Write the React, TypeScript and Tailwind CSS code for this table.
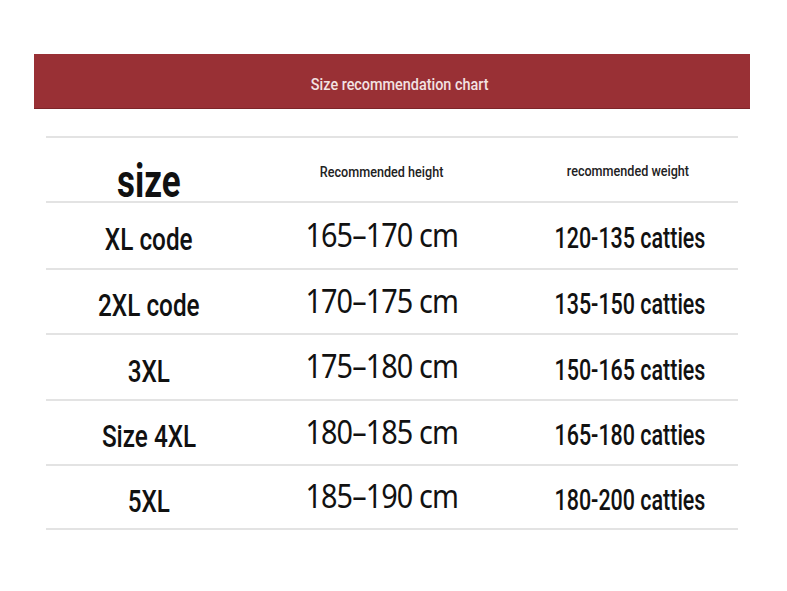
import React from "react";

const rows = [
  { size: "XL code", h: "165–170 cm", w: "120-135 catties", ht: "h-[67px]" },
  { size: "2XL code", h: "170–175 cm", w: "135-150 catties", ht: "h-[65px]" },
  { size: "3XL", h: "175–180 cm", w: "150-165 catties", ht: "h-[66px]" },
  { size: "Size 4XL", h: "180–185 cm", w: "165-180 catties", ht: "h-[65px]" },
  { size: "5XL", h: "185–190 cm", w: "180-200 catties", ht: "h-[64px]" },
];

const roboto = "font-['Roboto',sans-serif]";

export default function App() {
  return (
    <div className="w-[787px] h-[591px] bg-white pt-[54px]">
      <div className="mx-[34px] w-[716px] h-[55px] bg-[#993035] border-b border-[#7d2529] flex items-center justify-center pl-[16px]">
        <span className={`${roboto} inline-block scale-x-[0.9] text-[16px] font-medium text-[#f3e2e2] pt-[8px] whitespace-nowrap`}>Size recommendation chart</span>
      </div>
      <div className="ml-[46px] w-[692px] mt-[27px] border-t-2 border-[#e3e3e3]">
        <div className="grid grid-cols-[206px_260px_226px] grid-rows-[63px] h-[65px] border-b-2 border-[#e3e3e3] items-center">
          <div className="h-full flex items-end justify-center">
            <span className={`${roboto} inline-block scale-x-[0.76] font-bold text-[46px] leading-[40px] text-[#111]`}>size</span>
          </div>
          <div className="text-center pt-[2px]">
            <span className={`${roboto} inline-block scale-x-[0.9] font-medium text-[14px] text-[#222] whitespace-nowrap`}>Recommended height</span>
          </div>
          <div className="text-center pl-[6px]">
            <span className={`${roboto} inline-block scale-x-[0.9] font-medium text-[14px] text-[#222] whitespace-nowrap`}>recommended weight</span>
          </div>
        </div>
        {rows.map((r) => (
          <div key={r.size} className={`grid grid-cols-[206px_260px_226px] ${r.ht} border-b-2 border-[#e3e3e3] items-center`}>
            <div className="text-center pt-[8px]">
              <span className={`${roboto} inline-block scale-x-[0.76] font-medium text-[32px] leading-none text-[#111] whitespace-nowrap`}>{r.size}</span>
            </div>
            <div className="text-center">
              <span className="font-['Noto_Sans',sans-serif] inline-block scale-x-[0.9] text-[32px] leading-none tracking-[-1px] text-[#111] whitespace-nowrap">{r.h}</span>
            </div>
            <div className="text-center pl-[10px] pt-[7px]">
              <span className={`${roboto} inline-block scale-x-[0.74] font-medium text-[29px] leading-none text-[#111] whitespace-nowrap`}>{r.w}</span>
            </div>
          </div>
        ))}
      </div>
    </div>
  );
}
